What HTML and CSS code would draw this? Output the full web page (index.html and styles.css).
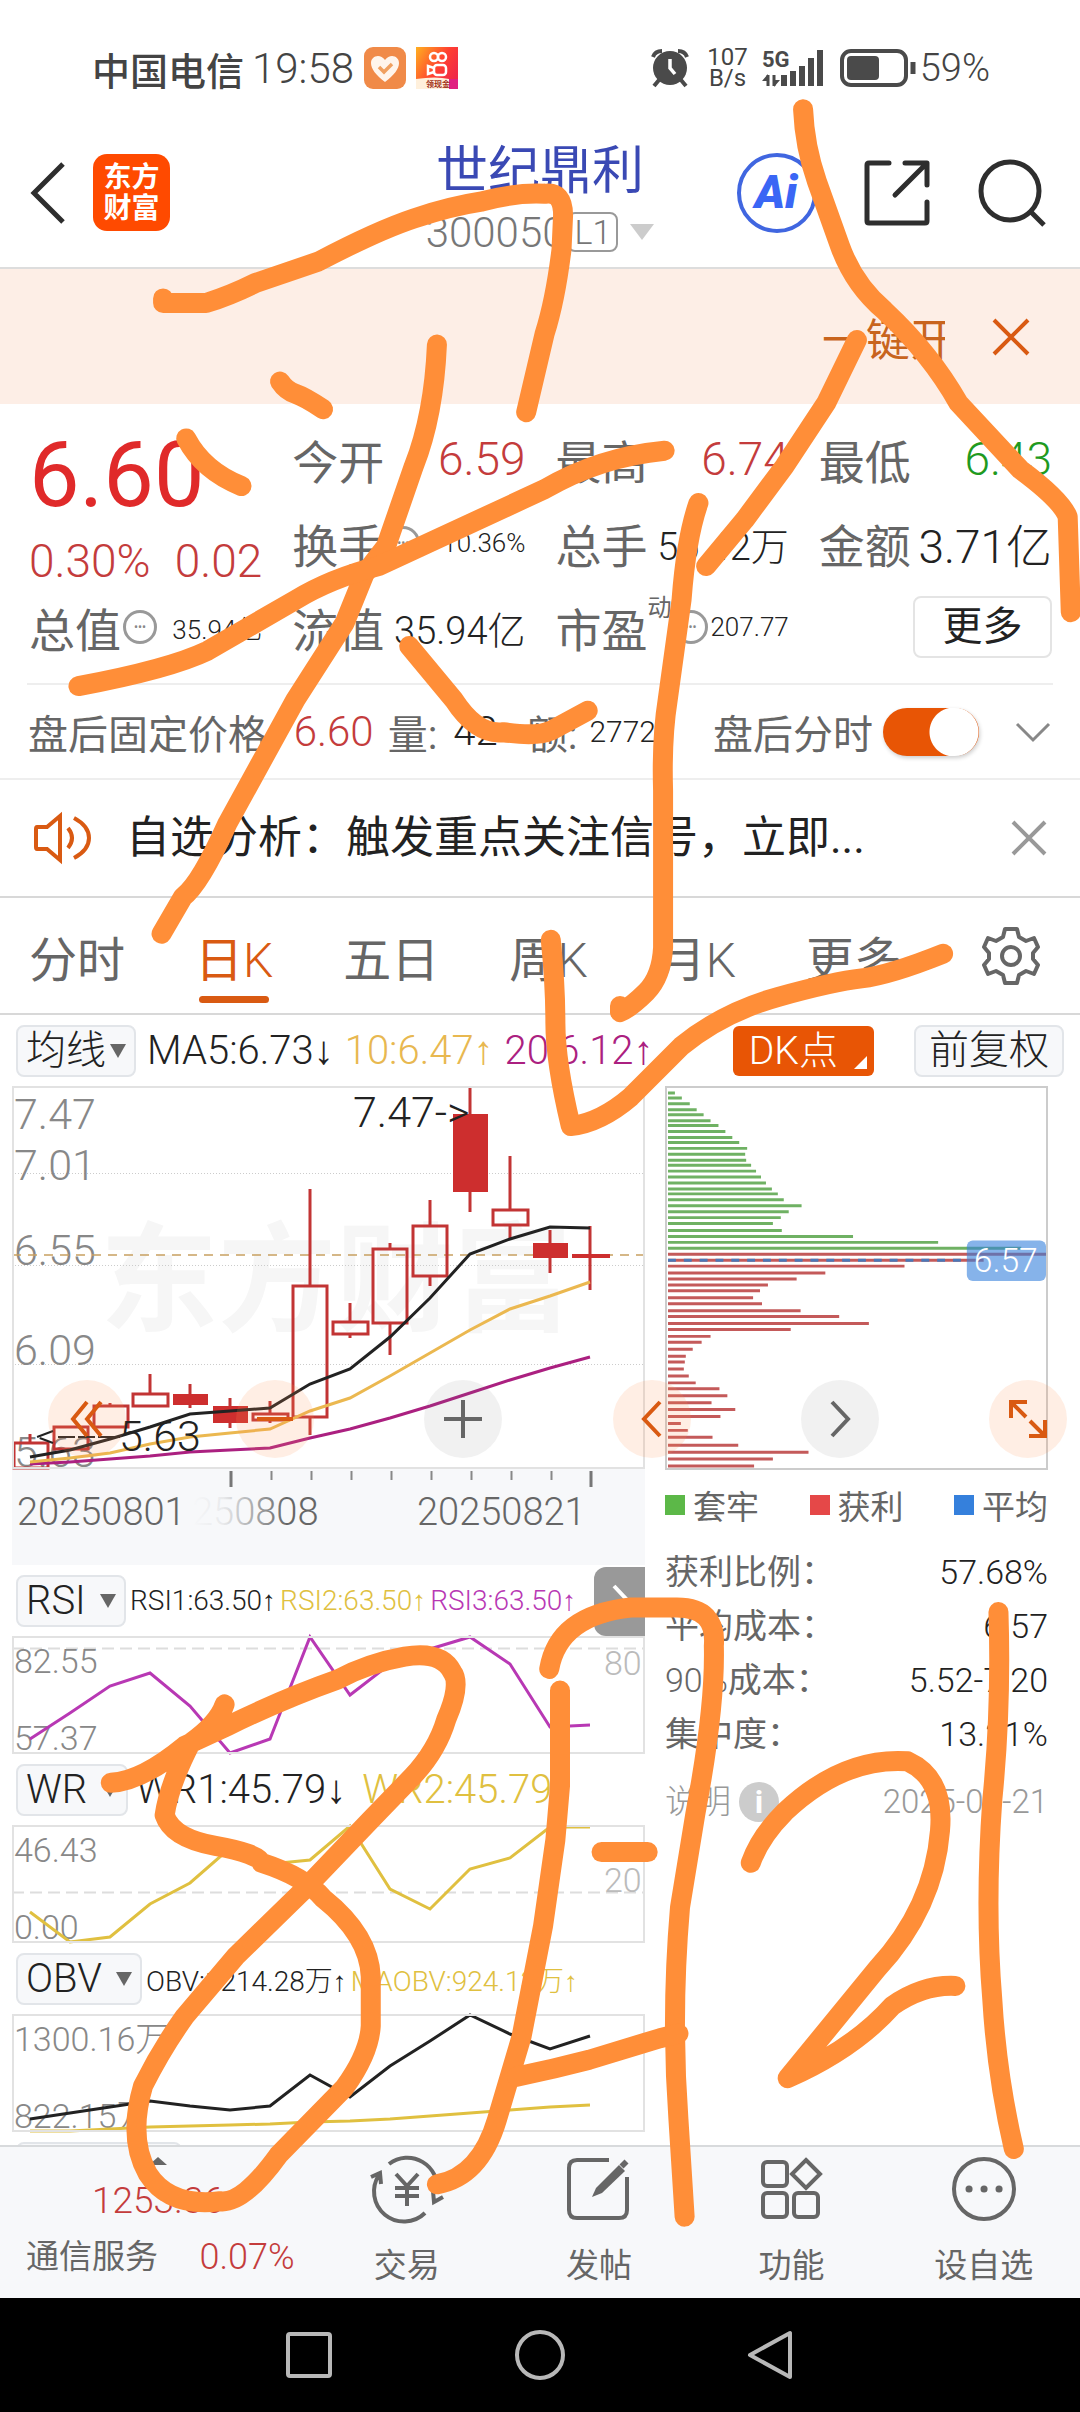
FILE: index.html
```html
<!DOCTYPE html>
<html lang="zh-CN">
<head>
    <meta charset="UTF-8">
    <meta name="viewport" content="width=device-width, initial-scale=1.0">
    <title>世纪鼎利 300050</title>
    <link rel="stylesheet" href="styles.css">
</head>
<body>
<div class="app">
    <div class="status-bar">
        <span class="carrier">中国电信</span>
        <span class="clock">19:58</span>
        <svg class="status-app" viewBox="0 0 42 42">
            <rect width="42" height="42" rx="9" fill="#f08a48"/>
            <path d="M21 35C12 28 7 22 7 16c0-7 9-10 14-3 5-7 14-4 14 3 0 6-5 12-14 19z" fill="#fff5ec"/>
            <path d="M15 20l5 5 8-8" fill="none" stroke="#f0a060" stroke-width="3.5"/>
        </svg>
        <svg class="status-app" viewBox="0 0 42 42">
            <defs>
                <linearGradient id="ks" x1="0" y1="0" x2="1" y2="0.6">
                    <stop offset="0" stop-color="#ffb020"/>
                    <stop offset="0.6" stop-color="#ff4030"/>
                    <stop offset="1" stop-color="#f02848"/>
                </linearGradient>
            </defs>
            <rect width="42" height="42" fill="url(#ks)"/>
            <path d="M0 32q20-3 33 0v10H0z" fill="#fff0dc"/>
            <g fill="none" stroke="#fff" stroke-width="2.5">
                <circle cx="18" cy="10" r="4"/><circle cx="26" cy="10" r="4"/>
                <rect x="18" y="18" width="12" height="10" rx="3"/>
                <path d="M18 21l-6-2v8l6-2"/>
            </g>
            <path d="M33 32h9v10h-9z" fill="#e02080"/>
            <text class="ks-note" x="10" y="40">领现金</text>
        </svg>
        <svg class="alarm" viewBox="0 0 38 38">
            <circle cx="19" cy="19" r="17" fill="#4a4a4a"/>
            <path d="M2 8q2-6 9-6M36 8q-2-6-9-6M8 31l-5 6M30 31l5 6" fill="none" stroke="#4a4a4a" stroke-width="4"/>
            <path d="M19 10v9l5 6" fill="none" stroke="#fff" stroke-width="3.5"/>
        </svg>
        <span class="net-speed">107<br>B/s</span>
        <svg class="signal" viewBox="0 0 64 40">
            <text class="signal-text" x="0" y="19">5G</text>
            <path d="M6 27v11M12 27v11" stroke="#4a4a4a" stroke-width="3"/>
            <path d="M0 33l6-7v7zM18 32l-6 7v-7z" fill="#4a4a4a"/>
            <path d="M22 38V27M31 38V23M40 38V18M49 38V10M58 38V2" stroke="#4a4a4a" stroke-width="6"/>
        </svg>
        <svg class="battery" viewBox="0 0 76 38">
            <rect x="2" y="2" width="64" height="34" rx="9" fill="none" stroke="#4a4a4a" stroke-width="4"/>
            <rect x="7" y="7" width="32" height="24" rx="4" fill="#4a4a4a"/>
            <path d="M73 13v12" stroke="#4a4a4a" stroke-width="5"/>
        </svg>
        <span class="battery-text">59%</span>
    </div>

    <header class="header">
        <button class="icon-btn" aria-label="返回">
            <svg width="36" height="64" viewBox="0 0 36 64"><path d="M33 3L4 32l29 29" fill="none" stroke="#2e2e2e" stroke-width="5"/></svg>
        </button>
        <a class="brand" href="#">东方<br>财富</a>
        <div class="stock">
            <h1>世纪鼎利</h1>
            <div class="stock-code">300050<span class="level">L1</span><i class="caret-light"></i></div>
        </div>
        <button class="icon-btn" aria-label="AI">
            <svg width="80" height="80" viewBox="0 0 80 80">
                <circle cx="40" cy="40" r="38" fill="none" stroke="#4066e0" stroke-width="4"/>
                <text class="ai-text" x="39" y="55" text-anchor="middle">Ai</text>
            </svg>
        </button>
        <button class="icon-btn share" aria-label="分享">
            <svg width="66" height="66" viewBox="0 0 66 66" fill="none" stroke="#2e2e2e" stroke-width="5" stroke-linecap="round" stroke-linejoin="round">
                <path d="M25 3H5q-2 0-2 2v56q0 2 2 2h56q2 0 2-2V42M41 3h22v22M62 4L31 35"/>
            </svg>
        </button>
        <button class="icon-btn search" aria-label="搜索">
            <svg width="68" height="68" viewBox="0 0 68 68" fill="none" stroke="#2e2e2e" stroke-width="5">
                <circle cx="32" cy="32" r="29"/><path d="M53 53l13 13"/>
            </svg>
        </button>
    </header>

    <div class="banner">
        <a class="banner-link" href="#">一键开户</a>
        <button class="icon-btn" aria-label="关闭">
            <svg width="38" height="38" viewBox="0 0 38 38"><path d="M2 2l34 34M36 2L2 36" stroke="#d95a12" stroke-width="4"/></svg>
        </button>
    </div>

    <section class="quote">
        <div class="price-box">
            <div class="price">6.60</div>
            <div class="change"><span>0.30%</span><span>0.02</span></div>
        </div>
        <div class="item"><span>今开</span><b class="up">6.59</b></div>
        <div class="item"><span>最高</span><b class="up">6.74</b></div>
        <div class="item"><span>最低</span><b class="down">6.43</b></div>
        <div class="item"><span>换手<i class="dots">•••</i></span><b class="small">10.36%</b></div>
        <div class="item"><span>总手</span><b class="mid">56.42万</b></div>
        <div class="item"><span>金额</span><b>3.71亿</b></div>
        <div class="item"><span>总值<i class="dots">•••</i></span><b class="small">35.94亿</b></div>
        <div class="item"><span>流值</span><b class="mid">35.94亿</b></div>
        <div class="item"><span>市盈<sup>动</sup><i class="dots">•••</i></span><b class="small">207.77</b></div>
        <button class="more-btn">更多</button>
    </section>

    <div class="after-hours">
        <span>盘后固定价格:</span><b class="up">6.60</b>
        <span>量:</span><b>42</b>
        <span class="amount">额:</span><b class="small">27720</b>
        <label class="switch">盘后分时<input type="checkbox" checked></label>
        <button class="icon-btn" aria-label="展开">
            <svg width="34" height="20" viewBox="0 0 34 20"><path d="M1 2l16 16L33 2" fill="none" stroke="#888" stroke-width="3"/></svg>
        </button>
    </div>

    <div class="notice">
        <svg width="58" height="50" viewBox="0 0 58 50" fill="none" stroke="#d95a12" stroke-width="4">
            <path d="M3 14h10L26 3v44L13 36H3q-1 0-1-2V16q0-2 1-2zM34 15q8 10 0 20M40 5q15 8 15 20T40 45"/>
        </svg>
        <p>自选分析：触发重点关注信号，立即...</p>
        <button class="icon-btn" aria-label="关闭">
            <svg width="34" height="34" viewBox="0 0 34 34"><path d="M1 1l32 32M33 1L1 33" stroke="#999" stroke-width="4"/></svg>
        </button>
    </div>

    <nav class="tabs">
        <div class="tab-list">
            <button>分时</button>
            <button class="active">日<b>K</b></button>
            <button>五日</button>
            <button>周<b>K</b></button>
            <button>月<b>K</b></button>
            <button>更多<i class="caret"></i></button>
        </div>
        <button class="icon-btn" aria-label="设置">
            <svg width="56" height="58" viewBox="0 0 56 58" fill="none" stroke="#666" stroke-width="4" stroke-linejoin="round">
                <path d="M22 2h12l2 8 7 4 8-3 4 9-5 6v6l5 6-4 9-8-3-7 4-2 8H22l-2-8-7-4-8 3-4-9 5-6v-6l-5-6 4-9 8 3 7-4z"/>
                <circle cx="28" cy="29" r="9"/>
            </svg>
        </button>
    </nav>

    <main class="content">
        <div class="ma-bar">
            <label class="picker"><select aria-label="主图指标"><option>均线</option></select></label>
            <span>MA5:6.73↓</span>
            <span class="gold">10:6.47↑</span>
            <span class="magenta">20:6.12↑</span>
            <button class="dk-btn">DK点</button>
            <button class="plain-btn">前复权</button>
        </div>

        <div class="panels">
            <div class="left">
                <svg class="chart" viewBox="0 0 633 383">
                    <text class="watermark" x="88" y="236">东方财富</text>
                    <g stroke="#ccc" stroke-dasharray="1 2">
                        <path d="M0 87.5h633M0 179.5h633M0 278.5h633"/>
                    </g>
                    <g class="axis">
                        <text x="2" y="43">7.47</text>
                        <text x="2" y="94">7.01</text>
                        <text x="2" y="179">6.55</text>
                        <text x="2" y="279">6.09</text>
                        <text x="2" y="381">5.63</text>
                    </g>
                    <path d="M0 169h633" stroke="#c8a060" stroke-width="1.5" stroke-dasharray="9 7"/>
                    <g fill="none" stroke="#c23434" stroke-width="3">
                        <!-- wicks -->
                        <path d="M18 348v9M18 382v1M98 317v3M138 288v20M138 320v1M178 298v24M218 312v30M258 315v12M258 334v3M298 103v97M298 331v18M338 217v19M338 248v4M378 157v6M378 237v32M418 114v26M418 190v10M458 0v126M498 70v54M498 139v14M538 144v43M578 140v64"/>
                        <!-- up candles -->
                        <path d="M2 357h34v25H2zM42 341h34v22H42zM82 320h34v21H82zM121 308h35v12h-35zM241 328h35v6h-35zM281 200h34v131h-34zM321 236h35v12h-35zM361 163h34v74h-34zM401 140h34v50h-34zM481 124h35v15h-35z"/>
                    </g>
                    <path d="M161 308h35v11h-35zM201 320h35v17h-35zM441 28h35v78h-35zM521 157h35v15h-35zM560 168h38v4h-38z" fill="#cd2e2e"/>
                    <g fill="none" stroke-width="3">
                        <path d="M18 378l40-2 40-3 40-3 40-4 40-2 40-2 40-10 40-9 40-11 40-12 40-13 40-13 40-12 40-11" stroke="#ab2080"/>
                        <path d="M18 376l40-4 40-5 40-9 40-7 40-4 40-4 40-18 40-13 40-22 40-23 40-23 40-21 40-13 40-14" stroke="#ebb850"/>
                        <path d="M18 371l40-7 40-11 40-12 40-13 40-3 40-3 40-24 40-15 40-32 40-39 40-44 40-15 40-12 40 1" stroke="#222"/>
                    </g>
                    <g class="peak">
                        <text x="341" y="41">7.47-&gt;</text>
                        <text x="107" y="365">5.63</text>
                        <path d="M41 345l-16 6 16 6M46 351h62" fill="none" stroke="#222" stroke-width="2" stroke-dasharray="17 3"/>
                    </g>
                </svg>
                <svg class="dates" viewBox="0 0 633 96">
                    <defs>
                        <linearGradient id="fade">
                            <stop offset="0" stop-color="#666" stop-opacity="0"/>
                            <stop offset="0.25" stop-color="#666" stop-opacity="0.1"/>
                            <stop offset="0.75" stop-color="#666"/>
                        </linearGradient>
                    </defs>
                    <path d="M219 2v16M579 2v16" stroke="#777" stroke-width="3"/>
                    <path d="M259.500 2v9M299.500 2v9M339.500 2v9M379.500 2v9M419.500 2v9M459.500 2v9M499.500 2v9M539.500 2v9" stroke="#888" stroke-width="2"/>
                    <text x="5" y="56">20250801</text>
                    <text x="180" y="56" fill="url(#fade)">250808</text>
                    <text x="405" y="56">20250821</text>
                </svg>

                <div class="indicator">
                    <label class="picker"><select aria-label="副图一"><option>RSI</option></select></label>
                    <span class="narrow">RSI1:63.50↑</span>
                    <span class="narrow yellow">RSI2:63.50↑</span>
                    <span class="narrow purple">RSI3:63.50↑</span>
                    <button class="side-tab" aria-label="收起"><svg width="20" height="36" viewBox="0 0 20 36"><path d="M2 2l15 16L2 34" fill="none" stroke="#fff" stroke-width="4"/></svg></button>
                </div>
                <svg class="sub-chart" viewBox="0 0 633 118">
                    <path d="M0 12.500h633" stroke="#ddd" stroke-width="2" stroke-dasharray="12 6"/>
                    <text x="2" y="37">82.55</text>
                    <text x="2" y="114">57.37</text>
                    <text class="limit" x="592" y="39">80</text>
                    <path d="M18 103l40-26 40-27 40-13 40 33 40 47 40-14 40-102 40 58 40-31 40-15 40-12 40 27 40 63 40-2" fill="none" stroke="#b838b4" stroke-width="3"/>
                </svg>

                <div class="indicator">
                    <label class="picker"><select aria-label="副图二"><option>WR</option></select></label>
                    <span>WR1:45.79↓</span>
                    <span class="yellow">WR2:45.79</span>
                </div>
                <svg class="sub-chart" viewBox="0 0 633 118">
                    <path d="M0 67.500h633" stroke="#ddd" stroke-width="2" stroke-dasharray="12 6"/>
                    <text x="2" y="37">46.43</text>
                    <text x="2" y="114">0.00</text>
                    <text class="limit" x="592" y="67">20</text>
                    <path d="M18 87l40 30 40-5 40-33 40-21 40-35 40 16 40-4 40-34 40 63 40 20 40-40 40-11 40-31h40" fill="none" stroke="#e0c040" stroke-width="3"/>
                </svg>

                <div class="indicator">
                    <label class="picker"><select aria-label="副图三"><option>OBV</option></select></label>
                    <span class="narrow">OBV:1214.28万↑</span>
                    <span class="narrow yellow">MAOBV:924.13万↑</span>
                </div>
                <svg class="sub-chart" viewBox="0 0 633 118">
                    <text x="2" y="37">1300.16万</text>
                    <text x="2" y="114">822.15万</text>
                    <path d="M18 117h40l40-2 40-2 40-1 40-1 40-1 40-2 40-1 40-2 40-3 40-3 40-3 40-3 40-2" fill="none" stroke="#e0c040" stroke-width="3"/>
                    <path d="M18 105l40-6 40-6 40-6 40 5 40 4 40-4 40-31 40 22 40-31 40-25 40-26 40 19 40 15 40-13" fill="none" stroke="#222" stroke-width="3"/>
                </svg>
                <div class="indicator">
                    <label class="picker last"><select aria-label="副图四"><option>MACD</option></select></label>
                </div>
            </div>

            <div class="right">
                <svg class="profile" viewBox="0 0 383 384">
                    <g fill="none" stroke-width="3">
                        <path stroke="#6fb163" d="M1 5h7M1 10h14M1 16h22M1 22h29M1 27h36M1 33h43M1 38h51M1 44h58M1 50h65M1 55h72M1 61h80M1 67h78M1 73h79M1 78h84M1 84h89M1 90h94M1 96h99M1 102h105M1 107h111M1 113h117M1 119h135M1 125h122M1 131h114M1 137h106M1 144h115M1 150h187M1 156h273M1 162h357"/>
                        <path stroke="#c45a5a" d="M1 168h382M1 174h319M1 180h239M1 187h159M1 193h130M1 199h101M1 205h93M1 212h86M1 218h95M1 225h134M1 231h173M1 238h203M1 244h124M1 251h43M1 257h34M1 264h25M1 271h18M1 277h17M1 284h16M1 291h21M1 298h28M1 304h52M1 311h60M1 318h44M1 325h68M1 332h53M1 339h13M1 346h20M1 353h45M1 361h71M1 368h142M1 375h106M1 382h87"/>
                        <path stroke="#4a78b8" d="M1 174h302" stroke-dasharray="8 8"/>
                    </g>
                    <rect x="303" y="154" width="80" height="41" rx="6" fill="#3580dc" fill-opacity="0.6"/>
                    <text class="tag" x="310" y="186">6.57</text>
                </svg>
                <div class="legend">
                    <span><i class="sq green"></i>套牢</span>
                    <span><i class="sq red"></i>获利</span>
                    <span><i class="sq blue"></i>平均</span>
                </div>
                <dl class="cost">
                    <div><dt>获利比例：</dt><dd>57.68%</dd></div>
                    <div><dt>平均成本：</dt><dd>6.57</dd></div>
                    <div><dt><b>90%</b>成本：</dt><dd>5.52-7.20</dd></div>
                    <div><dt>集中度：</dt><dd>13.21%</dd></div>
                </dl>
                <div class="explain"><span>说明<i class="info">i</i></span><span>2025-08-21</span></div>
            </div>

            <div class="tools">
                <button aria-label="左移"><svg width="32" height="36" viewBox="0 0 32 36"><path d="M16 1L2 18l14 17M30 1L16 18l14 17"/></svg></button>
                <button aria-label="缩小"><svg width="40" height="36" viewBox="0 0 40 36"><path d="M2 18h36"/></svg></button>
                <button class="grey" aria-label="放大"><svg width="38" height="38" viewBox="0 0 38 38"><path d="M0 19h38M19 0v38"/></svg></button>
                <button aria-label="向左"><svg width="20" height="36" viewBox="0 0 20 36"><path d="M18 1L2 18l16 17"/></svg></button>
                <button class="grey" aria-label="向右"><svg width="20" height="36" viewBox="0 0 20 36"><path d="M2 1l16 17L2 35"/></svg></button>
                <button aria-label="全屏"><svg width="38" height="38" viewBox="0 0 38 38"><path d="M18 2H2v16M2 2l15 15M20 36h16V20M36 36L21 21"/></svg></button>
            </div>
        </div>
    </main>

    <footer class="bottom-bar">
        <div class="sector">
            <i class="sector-arrow"></i>
            <div class="sector-value">1253.36</div>
            <div class="sector-row"><span>通信服务</span><b>0.07%</b></div>
        </div>
        <button>
            <svg width="72" height="64" viewBox="0 0 72 64">
                <path d="M18 7A30 30 0 0 1 66 35M54 56A30 30 0 0 1 8 18M0 20l9-4 1 11M72 40l-9 5-1-11M25 17l11 12 11-12M36 29v20M24 31h24M24 39h24"/>
            </svg>交易
        </button>
        <button>
            <svg width="64" height="64" viewBox="0 0 64 64">
                <path d="M42 3H10q-8 0-8 8v42q0 8 8 8h42q8 0 8-8V20"/><path d="M25 40l4-9 23-23 6 6-23 22z" fill="#666" stroke="none"/><path d="M55 5l4 4" stroke-width="7"/>
            </svg>发帖
        </button>
        <button>
            <svg width="62" height="64" viewBox="0 0 62 64">
                <rect x="3" y="5" width="24" height="24" rx="4"/><rect x="3" y="36" width="24" height="24" rx="4"/><rect x="34" y="36" width="24" height="24" rx="4"/><path d="M46 3l14 14-14 14-14-14z"/>
            </svg>功能
        </button>
        <button>
            <svg width="64" height="64" viewBox="0 0 64 64">
                <circle cx="32" cy="32" r="30"/><path d="M17 32h.1M32 32h.1M47 32h.1" stroke-width="7" stroke-linecap="round"/>
            </svg>设自选
        </button>
    </footer>

    <div class="system-nav">
        <button aria-label="最近任务"><svg width="50" height="50" viewBox="0 0 50 50"><rect x="4" y="4" width="42" height="42" rx="2"/></svg></button>
        <button aria-label="主屏幕"><svg width="50" height="50" viewBox="0 0 50 50"><circle cx="25" cy="25" r="23"/></svg></button>
        <button aria-label="返回上级"><svg width="50" height="50" viewBox="0 0 50 50"><path d="M44 3v44L4 25z"/></svg></button>
    </div>

    <!-- handwriting layer -->
    <svg class="ink" viewBox="0 0 702 1568" preserveAspectRatio="none">
        <path d="M106 194V197H134Q150 192 166 184L207 170Q245 150 269 142T313 131Q335 125 354 126 366 124 366 140L365 162Q361 195 354 217L342 268"/>
        <path d="M182 248Q186 254 192 256T210 266"/>
        <path d="M284 224Q282 270 269 303L251 355 237 373 224 405 192 455 148 535Q130 575 119 583L105 607"/>
        <path d="M121 285Q132 306 157 316"/>
        <path d="M432 293Q390 297 354 318L246 368Q215 376 192 390L135 423Q110 435 51 446"/>
        <path d="M266 420L295 455Q310 478 327 476 350 479 358 475L382 462"/>
        <path d="M454 327Q446 350 443 390L434 455Q430 480 431 514V616Q430 635 420 645T403 658V654"/>
        <path d="M522 71Q523 95 531 118L546 160Q555 185 575 202 605 230 623 262L663 305Q690 325 694 336L696 398"/>
        <path d="M557 221L537 262 510 303 484 338 459 368"/>
        <path d="M358 611Q361 640 361 665T371 732Q390 730 410 713L443 680Q470 658 506 648T560 636 613 620"/>
        <path d="M146 1108Q142 1120 124 1133 110 1160 107 1180 112 1195 140 1200T170 1211Q198 1220 210 1234 240 1258 241 1285V1317Q240 1335 224 1357L181 1401Q158 1433 143 1431 110 1435 96 1413 83 1390 93 1356 105 1332 120 1311L153 1272 197 1229 241 1183 268 1155Q284 1138 290 1118 300 1095 294 1087 287 1073 263 1077 240 1081 219 1092 185 1104 148 1122L120 1135Q92 1158 72 1159"/>
        <path d="M364 1099V1161L361 1196 353 1252 339 1324 323 1378Q312 1415 284 1420"/>
        <path d="M357 1085Q363 1050 410 1045H440Q466 1045 464 1070 465 1110 452 1179L442 1240Q436 1310 441 1378L445 1441"/>
        <path d="M391 1204H421"/>
        <path d="M336 1350Q360 1345 383 1339L429 1325 441 1322"/>
        <path d="M488 1211Q494 1194 510 1178 548 1142 590 1145 614 1156 611 1190 607 1240 570 1280L512 1351Q555 1332 580 1304 600 1290 621 1291"/>
        <path d="M649 1048Q651 1110 645 1170 640 1240 645 1300 648 1350 659 1397"/>
    </svg>
</div>
</body>
</html>
```

FILE: styles.css
```css
* {
    box-sizing: border-box;
}

body {
    margin: 0;
    font-family: Roboto, "Liberation Sans", "Noto Sans CJK SC", sans-serif;
    font-weight: 300;
    color: #222;
    background: #fff;
}

button, select {
    font: inherit;
    color: inherit;
    border: none;
    background: none;
    padding: 0;
    margin: 0;
}

a {
    text-decoration: none;
}

i {
    font-style: normal;
}

b {
    font-weight: 300;
}

svg {
    display: block;
    flex-shrink: 0;
    overflow: visible;
}

.app {
    position: relative;
    display: flex;
    flex-direction: column;
    height: 100vh;
    overflow: hidden;
    white-space: nowrap;
}

.icon-btn {
    display: flex;
    align-items: center;
}

/* system status bar */
.status-bar {
    display: flex;
    align-items: center;
    height: 118px;
    padding: 18px 90px 0 92px;
    color: #444;
    font-size: 42px;
}

.carrier {
    font-size: 38px;
    font-weight: 500;
    margin-right: 8px;
}

.status-app {
    width: 42px;
    height: 42px;
    margin-left: 10px;
}

.ks-note {
    font-size: 8px;
    font-weight: 700;
    fill: #a03018;
}

.alarm {
    width: 38px;
    height: 38px;
    margin-left: auto;
}

.net-speed {
    margin: 0 14px 0 18px;
    font-size: 24px;
    line-height: 21px;
    font-weight: 400;
    text-align: center;
}

.signal {
    width: 64px;
    height: 40px;
}

.signal-text {
    font-size: 22px;
    font-weight: 700;
    fill: #4a4a4a;
}

.battery {
    width: 76px;
    height: 38px;
    margin: 0 4px 0 14px;
}

.battery-text {
    font-size: 38px;
}

/* header */
.header {
    position: relative;
    display: flex;
    align-items: center;
    height: 151px;
    padding: 0 34px 0 30px;
    border-bottom: 2px solid #ddd;
}

.brand {
    width: 77px;
    height: 77px;
    margin-left: 27px;
    margin-right: auto;
    padding-top: 8px;
    border-radius: 14px;
    background: #ff4a00;
    color: #fff;
    font-size: 28px;
    line-height: 31px;
    font-weight: 700;
    text-align: center;
}

.stock {
    position: absolute;
    left: 0;
    right: 0;
    top: 20px;
    text-align: center;
    pointer-events: none;
}

.stock h1 {
    margin: 0;
    font-size: 52px;
    line-height: 68px;
    font-weight: 400;
    color: #3a49b4;
}

.stock-code {
    display: flex;
    justify-content: center;
    align-items: center;
    height: 52px;
    font-size: 42px;
    color: #777;
}

.level {
    margin-left: 2px;
    padding: 0 5px;
    font-size: 34px;
    line-height: 36px;
    border: 2px solid #999;
    border-radius: 8px;
}

.caret-light {
    margin-left: 12px;
    border: 12px solid transparent;
    border-top: 16px solid #ccc;
    border-bottom: none;
}

.ai-text {
    font-size: 46px;
    font-weight: 900;
    font-style: italic;
    fill: #3a66f5;
}

.share {
    margin-left: 47px;
}

.search {
    margin-left: 48px;
}

.banner {
    display: flex;
    align-items: center;
    justify-content: flex-end;
    height: 135px;
    padding: 0 50px;
    background: #fdeee6;
}

.banner-link {
    width: 123px;
    margin-right: 47px;
    overflow: hidden;
    font-size: 44px;
    font-weight: 400;
    color: #c8641e;
}

/* quote */
.quote {
    display: grid;
    grid-template-columns: repeat(4, 1fr);
    grid-auto-rows: 84px;
    column-gap: 30px;
    margin: 0 27px;
    padding: 13px 1px 14px 2px;
    border-bottom: 2px solid #eee;
}

.price-box {
    grid-row: span 2;
}

.price {
    font-size: 90px;
    line-height: 118px;
    font-weight: 400;
    color: #e02a2a;
}

.change {
    display: flex;
    justify-content: space-between;
    font-size: 46px;
    line-height: 52px;
    color: #c43c3c;
}

.item {
    display: flex;
    justify-content: space-between;
    align-items: center;
    font-size: 46px;
}

.item span {
    display: flex;
    align-items: center;
    font-weight: 400;
    color: #666;
}

.item .mid {
    font-size: 38px;
}

.item .small {
    font-size: 26px;
}

.item sup {
    align-self: flex-start;
    font-size: 24px;
    line-height: 28px;
}

.dots {
    width: 34px;
    height: 34px;
    margin-left: 2px;
    border: 3px solid #999;
    border-radius: 50%;
    font-size: 12px;
    line-height: 28px;
    text-align: center;
    color: #888;
}

.up {
    color: #c43c3c;
}

.down {
    color: #1f9a1f;
}

.more-btn {
    justify-self: end;
    align-self: center;
    width: 139px;
    height: 62px;
    border: 2px solid #e4e4e4;
    border-radius: 8px;
    font-size: 40px;
    line-height: 56px;
    font-weight: 400;
}

.after-hours {
    display: flex;
    align-items: center;
    height: 95px;
    padding: 0 30px 0 28px;
    border-bottom: 2px solid #eee;
    font-size: 40px;
    font-weight: 400;
    color: #666;
}

.after-hours b {
    margin: 0 14px 0 16px;
    color: #222;
}

.after-hours .up {
    font-size: 42px;
    color: #c43c3c;
}

.after-hours .amount {
    margin-left: 16px;
}

.after-hours .small {
    margin: 0 14px 0 12px;
    font-size: 30px;
}

.switch {
    display: flex;
    align-items: center;
    margin-left: auto;
    margin-right: 37px;
}

.switch input {
    appearance: none;
    width: 96px;
    height: 48px;
    margin: 0 0 0 10px;
    border-radius: 24px;
    background: radial-gradient(circle at 71px 24px, #fff 24px, transparent 25px), #e85505;
    box-shadow: 1px 2px 4px rgba(0, 0, 0, 0.2);
}

.notice {
    display: flex;
    align-items: center;
    height: 118px;
    padding: 0 34px;
    border-bottom: 2px solid #d8d8d8;
}

.notice p {
    flex: 1;
    margin: 0 0 0 34px;
    font-size: 44px;
    line-height: 60px;
    font-weight: 400;
}

.tabs {
    display: flex;
    align-items: center;
    justify-content: space-between;
    height: 117px;
    padding: 0 41px 0 29px;
    border-bottom: 2px solid #d8d8d8;
    font-size: 48px;
    font-weight: 400;
    color: #666;
}

.tab-list {
    display: flex;
    gap: 70px;
}

.tab-list button {
    position: relative;
}

.tab-list .active {
    color: #d95a12;
}

.tab-list .active::after {
    content: "";
    position: absolute;
    left: 4px;
    right: 4px;
    bottom: -12px;
    height: 7px;
    border-radius: 4px;
    background: #d95a12;
}

.caret {
    display: inline-block;
    margin-left: 4px;
    vertical-align: middle;
    border: 7px solid transparent;
    border-top: 10px solid #777;
    border-bottom: none;
}

/* chart area */
.content {
    flex: 1;
    min-height: 0;
    overflow: hidden;
}

.ma-bar {
    display: flex;
    align-items: center;
    height: 71px;
    padding: 0 16px;
    font-size: 40px;
}

.ma-bar > span {
    margin-left: 11px;
}

.picker {
    position: relative;
    display: flex;
    align-items: center;
    height: 52px;
    padding: 0 8px;
    border: 2px solid #e2e5e9;
    border-radius: 8px;
    background: #f7f8fa;
}

.picker::after {
    content: "";
    margin-left: 4px;
    border: 8px solid transparent;
    border-top: 14px solid #666;
    border-bottom: none;
}

.picker select {
    appearance: none;
    line-height: 48px;
}

.gold {
    color: #e8b850;
}

.yellow {
    color: #e0c040;
}

.magenta {
    color: #ab2080;
}

.purple {
    color: #b838b4;
}

.dk-btn {
    position: relative;
    height: 50px;
    margin-left: auto;
    padding: 0 36px 0 16px;
    border-radius: 6px;
    background: #e85505;
    color: #fff;
    font-size: 39px;
    line-height: 46px;
}

.dk-btn::after {
    content: "";
    position: absolute;
    right: 7px;
    bottom: 7px;
    border-left: 13px solid transparent;
    border-bottom: 13px solid #fff;
}

.plain-btn {
    height: 52px;
    margin-left: 40px;
    padding: 0 13px;
    border: 2px solid #e2e5e9;
    border-radius: 8px;
    background: #f7f8fa;
    font-size: 40px;
    line-height: 46px;
}

.panels {
    position: relative;
    display: grid;
    grid-template-columns: 633fr 383fr;
    column-gap: 20px;
    align-items: start;
    padding: 0 32px 0 12px;
}

.chart, .dates, .sub-chart, .profile {
    width: 100%;
    height: auto;
}

.chart, .sub-chart {
    outline: 2px solid #e2e2e2;
    outline-offset: -2px;
}

.chart .axis {
    font-size: 43px;
    fill: #888;
}

.watermark {
    font-size: 118px;
    font-weight: 700;
    fill: #f6f6f6;
}

.peak {
    font-size: 43px;
    fill: #222;
}

.dates {
    background: #f7f8fa;
    font-size: 38px;
    fill: #666;
}

.sub-chart {
    font-size: 34px;
    fill: #888;
}

.limit {
    fill: #bbb;
}

.indicator {
    position: relative;
    display: flex;
    align-items: center;
    height: 71px;
    padding-left: 4px;
    font-size: 40px;
}

.indicator .picker::after {
    margin-left: 14px;
}

.indicator .picker.last {
    width: 166px;
}

.indicator > span {
    margin-left: 8px;
    margin-right: 8px;
}

.indicator .narrow {
    margin: 0 0 0 4px;
    font-size: 28px;
}

.side-tab {
    position: absolute;
    right: 0;
    top: 2px;
    width: 51px;
    height: 69px;
    padding-left: 18px;
    border-radius: 12px 0 0 12px;
    background: #999;
}

.profile {
    border: 2px solid #ccc;
}

.tag {
    font-size: 34px;
    fill: #fff;
}

.legend {
    display: flex;
    justify-content: space-between;
    align-items: center;
    height: 70px;
    font-size: 33px;
    font-weight: 400;
    color: #666;
}

.legend span {
    display: flex;
    align-items: center;
}

.sq {
    width: 20px;
    height: 20px;
    margin-right: 8px;
}

.green {
    background: #5cb848;
}

.red {
    background: #e54848;
}

.blue {
    background: #3580dc;
}

.cost {
    margin: 5px 0 14px;
    font-size: 34px;
    line-height: 54px;
}

.cost div, .explain {
    display: flex;
    justify-content: space-between;
}

.cost dt {
    font-weight: 400;
    color: #666;
}

.cost dd {
    margin: 0;
}

.explain {
    font-size: 33px;
    line-height: 54px;
    color: #999;
}

.explain span {
    display: flex;
    align-items: center;
}

.info {
    width: 40px;
    height: 40px;
    margin-left: 8px;
    border-radius: 50%;
    background: #ccc;
    color: #fff;
    font-size: 32px;
    line-height: 40px;
    font-weight: 700;
    text-align: center;
}

/* round chart tools lie over both panels */
.tools {
    position: absolute;
    left: 48px;
    right: 13px;
    top: 294px;
    display: flex;
    justify-content: space-between;
}

.tools button {
    display: flex;
    align-items: center;
    justify-content: center;
    width: 78px;
    height: 78px;
    border-radius: 50%;
    background: rgba(255, 150, 90, 0.16);
}

.tools .grey {
    background: rgba(120, 120, 120, 0.1);
}

.tools svg {
    fill: none;
    stroke: #d95a12;
    stroke-width: 4;
}

.tools .grey svg {
    stroke: #666;
}

/* bottom bar */
.bottom-bar {
    display: grid;
    grid-template-columns: 310fr repeat(4, 192fr);
    height: 153px;
    border-top: 2px solid #d8dadc;
    background: #f7f8fa;
    font-size: 33px;
    font-weight: 400;
    color: #666;
}

.bottom-bar button {
    display: flex;
    flex-direction: column;
    align-items: center;
    padding-top: 10px;
    line-height: 90px;
}

.bottom-bar svg {
    fill: none;
    stroke: #666;
    stroke-width: 4;
}

.sector {
    padding: 10px 16px 0 26px;
    color: #c43c3c;
}

.sector-arrow {
    display: block;
    width: 18px;
    margin-left: 123px;
    border: 9px solid transparent;
    border-bottom: 8px solid #666;
    border-top: none;
}

.sector-value {
    padding-left: 66px;
    font-size: 37px;
    line-height: 72px;
    font-weight: 300;
}

.sector-row {
    display: flex;
    justify-content: space-between;
    line-height: 40px;
}

.sector-row span {
    color: #666;
}

.sector-row b {
    font-size: 36px;
}

.system-nav {
    display: flex;
    align-items: center;
    justify-content: space-between;
    height: 114px;
    padding: 0 284px;
    background: #000;
}

.system-nav svg {
    fill: none;
    stroke: #b8b8b8;
    stroke-width: 4;
    stroke-linejoin: round;
}

/* pen strokes over the whole screen */
.ink {
    position: absolute;
    inset: 0;
    width: 100%;
    height: 100%;
    pointer-events: none;
    fill: none;
    stroke: #ff8e38;
    stroke-width: 13;
    stroke-linecap: round;
    stroke-linejoin: round;
}
```
